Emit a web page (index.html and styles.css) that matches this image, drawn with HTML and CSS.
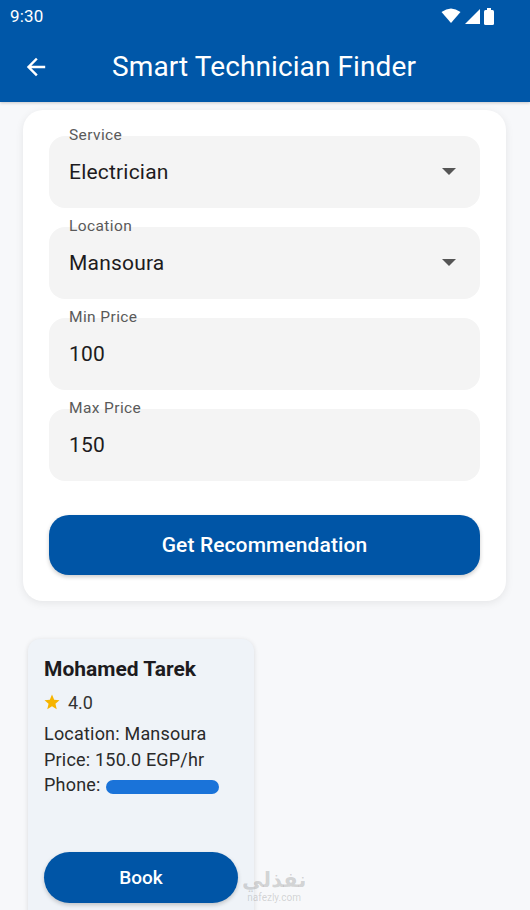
FILE: index.html
```html
<!DOCTYPE html>
<html>
<head>
<meta charset="utf-8">
<link rel="stylesheet" href="styles.css">
</head>
<body>
<div class="screen">
  <header class="top">
    <div class="status">
      <span class="time">9:30</span>
      <div class="sicons">
        <svg width="20" height="16" viewBox="0 0 20 16"><path d="M10 15 L0.5 4 Q10 -3 19.5 4 Z" fill="#fff"/></svg>
        <svg width="15" height="15" viewBox="0 0 15 15"><path d="M15 0 V15 H0 Z" fill="#fff"/></svg>
        <svg width="10" height="17" viewBox="0 0 10 17"><rect x="0" y="2" width="10" height="15" rx="1.5" fill="#fff"/><rect x="3" y="0" width="4" height="3" fill="#fff"/></svg>
      </div>
    </div>
    <div class="appbar">
      <svg class="back" width="24" height="24" viewBox="0 0 24 24"><path d="M20 12H5M12 4.5L4.5 12 12 19.5" stroke="#fff" stroke-width="2.4" fill="none" stroke-linecap="square"/></svg>
      <h1>Smart Technician Finder</h1>
    </div>
  </header>

  <main class="content">
    <section class="form-card">
      <div class="field">
        <span class="label">Service</span>
        <span class="value">Electrician</span>
        <svg class="caret" width="14" height="8" viewBox="0 0 14 8"><path d="M0 0H14L7 7Z" fill="#555"/></svg>
      </div>
      <div class="field">
        <span class="label">Location</span>
        <span class="value">Mansoura</span>
        <svg class="caret" width="14" height="8" viewBox="0 0 14 8"><path d="M0 0H14L7 7Z" fill="#555"/></svg>
      </div>
      <div class="field">
        <span class="label">Min Price</span>
        <span class="value">100</span>
      </div>
      <div class="field">
        <span class="label">Max Price</span>
        <span class="value">150</span>
      </div>
      <button class="primary">Get Recommendation</button>
    </section>

    <section class="results">
      <article class="tech">
        <h2>Mohamed Tarek</h2>
        <div class="rating">
          <svg width="18" height="18" viewBox="0 0 24 24"><path d="M12 2l2.9 6.9 7.1.6-5.4 4.7 1.7 7.3L12 17.7 5.7 21.5l1.7-7.3L2 9.5l7.1-.6z" fill="#f6b400"/></svg>
          <span>4.0</span>
        </div>
        <p>Location: Mansoura</p>
        <p>Price: 150.0 EGP/hr</p>
        <p class="phone">Phone: <span class="scribble"></span></p>
        <button class="book">Book</button>
      </article>
    </section>
  </main>

  <div class="watermark"><span class="ar">نفذلي</span><span class="en">nafezly.com</span></div>
</div>
</body>
</html>
```
FILE: styles.css
```css
* { box-sizing: border-box; }
html, body { margin: 0; padding: 0; }
body {
  font-family: Roboto, "Noto Sans", sans-serif;
  background: #f7f8fa;
  width: 530px;
  height: 910px;
  overflow: hidden;
}
.screen { position: relative; width: 530px; height: 910px; }

.top {
  background: #0057a8;
  color: #fff;
  height: 102px;
  box-shadow: 0 1px 3px rgba(0,0,0,0.2);
}
.status {
  height: 32px;
  display: flex;
  align-items: center;
  justify-content: space-between;
  padding: 0 36px 0 10px;
}
.time { font-size: 17px; letter-spacing: 0.2px; }
.sicons { display: flex; align-items: center; gap: 4px; }
.appbar {
  height: 70px;
  display: flex;
  align-items: center;
  padding-left: 24px;
}
.back { margin-right: 64px; }
.appbar h1 {
  margin: 0;
  font-size: 28px;
  font-weight: 400;
  letter-spacing: 0.1px;
  padding-bottom: 2px;
}

.content { padding: 8px 24px 0 23px; }

.form-card {
  background: #fff;
  border-radius: 20px;
  padding: 26px 26px 26px 26px;
  box-shadow: 0 2px 8px rgba(0,0,0,0.08);
  display: flex;
  flex-direction: column;
}
.field {
  position: relative;
  height: 72px;
  background: #f4f4f4;
  border-radius: 16px;
  display: flex;
  align-items: center;
  padding: 0 20px;
  margin-bottom: 19px;
}
.field:nth-of-type(4) { margin-bottom: 34px; }
.label {
  position: absolute;
  left: 20px;
  top: -10px;
  font-size: 15.5px;
  color: #5a5a5a;
  letter-spacing: 0.4px;
}
.value {
  flex: 1;
  font-size: 21px;
  color: #1d1b20;
  letter-spacing: 0.2px;
}
.caret { margin-right: 4px; }

.primary {
  height: 60px;
  border: none;
  border-radius: 20px;
  background: #0055a6;
  color: #fff;
  font-family: Roboto, sans-serif;
  font-size: 21px;
  font-weight: 500;
  letter-spacing: 0.1px;
  box-shadow: 0 2px 4px rgba(0,0,0,0.2);
}

.results { padding: 38px 0 0 5px; }
.tech {
  width: 226px;
  height: 300px;
  background: #eff3f8;
  border-radius: 12px;
  box-shadow: 0 1px 5px rgba(0,0,0,0.12);
  padding: 16px 16px;
  display: flex;
  flex-direction: column;
  color: #1d1b20;
}
.tech h2 {
  margin: 1px 0 8px;
  font-size: 21px;
  font-weight: 700;
  line-height: 26px;
}
.rating {
  display: flex;
  align-items: center;
  gap: 7px;
  font-size: 18px;
  height: 24px;
  margin-bottom: 7px;
  color: #333;
}
.rating svg { margin-left: -1px; }
.tech p {
  margin: 0;
  font-size: 18px;
  line-height: 25.5px;
  color: #2a2a2a;
  letter-spacing: 0.2px;
}
.phone { display: flex; align-items: center; }
.scribble {
  display: inline-block;
  width: 113px;
  height: 14px;
  background: #1a73d9;
  border-radius: 7px;
  margin-left: 5px;
  margin-top: 5px;
}
.book {
  margin-top: auto;
  margin-bottom: 20px;
  height: 51px;
  border: none;
  border-radius: 26px;
  background: #0055a6;
  color: #fff;
  font-family: Roboto, sans-serif;
  font-size: 19px;
  font-weight: 500;
  box-shadow: 0 2px 4px rgba(0,0,0,0.2);
}

.watermark {
  position: absolute;
  left: 242px;
  top: 868px;
  display: flex;
  flex-direction: column;
  align-items: center;
  gap: 2px;
  color: rgba(120,120,120,0.3);
  line-height: 1;
}
.watermark .ar { font-family: "Noto Sans", "DejaVu Sans", sans-serif; font-size: 21px; font-weight: 700; line-height: 22px; }
.watermark .en { font-size: 10px; line-height: 11px; }
```
